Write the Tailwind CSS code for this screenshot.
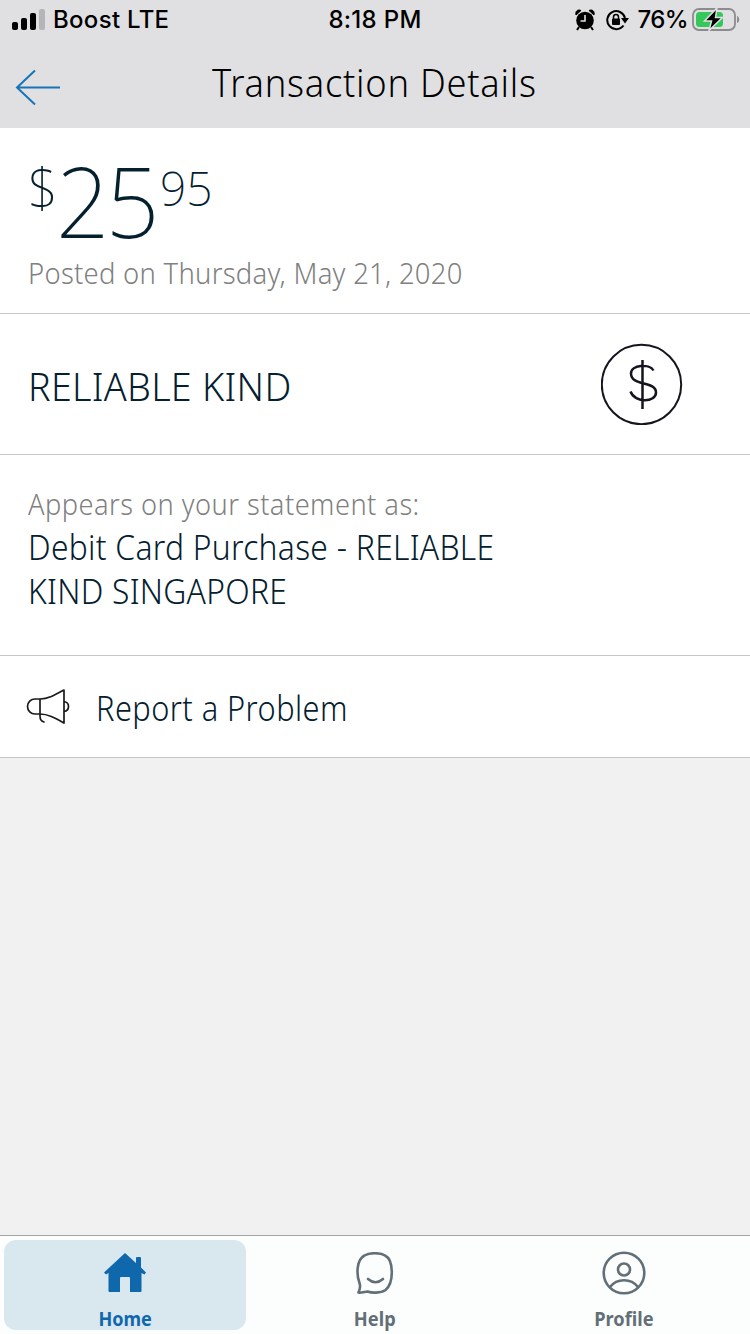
<!DOCTYPE html>
<html lang="en">
<head>
<meta charset="utf-8">
<title>Transaction Details</title>
<script src="https://cdn.jsdelivr.net/npm/@tailwindcss/browser@4"></script>
</head>
<body class="w-[750px] h-[1334px] overflow-hidden flex flex-col bg-[#f1f1f1] font-['Noto_Sans',sans-serif] font-light text-[#04202f] whitespace-nowrap">
<header class="h-32 bg-[#e0e0e2] text-black flex flex-col">
  <div class="h-10 grid grid-cols-3 font-['Inter',sans-serif] font-medium text-[24px] leading-10">
    <div class="flex items-center pl-3">
      <svg class="w-[33px] h-[22px]" viewBox="0 0 33 22"><rect x="0" y="13" width="6" height="8" rx="2"/><rect x="9" y="9" width="6" height="12" rx="2"/><rect x="18" y="4" width="6" height="17" rx="2"/><rect x="27" y="0" width="6" height="21" rx="2" fill="#b5b5b7"/></svg>
      <span class="ml-[8px] tracking-[0.3px]">Boost LTE</span>
    </div>
    <div class="text-center tracking-[0.3px]">8:18 PM</div>
    <div class="flex items-center justify-end pr-[10px]">
      <svg class="w-[20px] h-[22px]" viewBox="0 0 20 22"><circle cx="10" cy="11.500" r="8.800"/><path d="M4 18 2 21M16 18l2 3" stroke="#000" stroke-width="2"/><path d="M1 6C0 2 3 0 6 1.500zM19 6C20 2 17 0 14 1.500z" stroke="#000"/><path d="M10 6v6H5.500" fill="none" stroke="#e0e0e2" stroke-width="1.600"/></svg>
      <svg class="w-[24px] h-[22px] ml-[11px]" viewBox="0 0 24 22"><path d="M17.500 16.500A9 9 0 1 1 19 9" fill="none" stroke="#000" stroke-width="2"/><path d="M15 9h8L19 14.500z"/><rect x="6" y="9.500" width="8" height="6.500" rx="1"/><path d="M7.500 10V8a2.500 2.500 0 0 1 5 0v2" fill="none" stroke="#000" stroke-width="1.500"/></svg>
      <span class="ml-[8px] tracking-[-0.6px]">76%</span>
      <svg class="w-[48px] h-[24px] ml-[4px]" viewBox="0 0 48 24"><rect x="1" y="1" width="42" height="21" rx="6" fill="none" stroke="#8c8c8e" stroke-width="1.800"/><path d="M45 8v7c3-1 3-6 0-7" fill="#8c8c8e"/><rect x="4" y="4" width="27" height="15" rx="3.500" fill="#34c759"/><path d="M25 0 12.500 13h7L17 22.500 30.500 9.500h-7z" stroke="#e0e0e2" stroke-width="1.500"/></svg>
    </div>
  </div>
  <div class="h-[88px] flex">
    <svg class="w-[46px] h-[36px] ml-[15px] mt-[29px]" viewBox="0 0 46 36" fill="none" stroke="#1874b8" stroke-width="2"><path d="M45 18.500H2M20 1.500 2 18.500l18 17"/></svg>
    <h1 class="ml-[151px] mt-[15px] text-[39px] leading-[54px] tracking-[0.8px] origin-left scale-x-[0.93]">Transaction Details</h1>
  </div>
</header>
<main class="bg-white">
  <section class="h-[186px] border-b border-[#c6c6c6] pl-[28px]">
    <div class="flex h-[120px]">
      <span class="w-[28px] text-[55px] leading-[66px] mt-[26px] font-extralight origin-left scale-x-[0.95]">$</span>
      <span class="w-[104px] text-[98px] leading-[90px] mt-[27px] font-extralight tracking-[-4px] origin-left scale-x-[0.96]">25</span>
      <span class="text-[48px] leading-[66px] mt-[27px] font-extralight origin-left scale-x-[0.96]">95</span>
    </div>
    <p class="w-fit text-[30px] leading-[50px] text-[#808080] tracking-[0.3px] origin-left scale-x-[0.914]">Posted on Thursday, May 21, 2020</p>
  </section>
  <section class="h-[141px] border-b border-[#c6c6c6] flex items-center justify-between pl-[28px] pr-[67px]">
    <h2 class="text-[39px] leading-[54px] mt-[4px] tracking-[0.3px] origin-left scale-x-[0.967]">RELIABLE KIND</h2>
    <svg class="w-[82px] h-[82px]" viewBox="0 0 82 82" fill="none" stroke="#15151f" stroke-width="2"><circle cx="40.500" cy="41.500" r="39.700"/><path d="M41.500 17v49M52.500 27.500c-4-7-22.500-6-22.500 3 0 13 25 7 25 19 0 10-21 11-25.500-1" stroke-width="2.500"/></svg>
  </section>
  <section class="h-[201px] border-b border-[#c6c6c6] pl-[28px] pt-[28px]">
    <p class="w-fit text-[29px] leading-[42px] text-[#808080] tracking-[0.5px] origin-left scale-x-[0.938]">Appears on your statement as:</p>
    <p class="w-fit text-[34px] leading-[44px] tracking-[0.3px] origin-left scale-x-[0.935]">Debit Card Purchase - RELIABLE<br>KIND SINGAPORE</p>
  </section>
  <section class="h-[102px] border-b border-[#c6c6c6] flex items-center pl-[26px]">
    <svg class="w-[44px] h-[36px]" viewBox="0 0 44 36" fill="none" stroke="#1a1a1a" stroke-width="1.700" stroke-linejoin="round" stroke-linecap="round"><path d="M38 1C29 6 22 10 14 10H9a7.500 7.500 0 0 0 0 15h5c8 0 15 4 24 9zM14 10v17q0 5 4 6M38 12.500c6 1 6 9 0 10"/></svg>
    <span class="ml-[26px] text-[34px] leading-[48px] mt-[3px] tracking-[0.5px] origin-left scale-x-[0.904]">Report a Problem</span>
  </section>
</main>
<nav class="mt-auto h-[99px] border-t border-[#a3a3a5] bg-[#fcfdfd] grid grid-cols-3 text-[#636f77] font-bold text-[19px] leading-[26px]">
  <a class="ml-1 mt-[4px] h-[90px] w-[242px] rounded-[12px] bg-[#d9e7ef] text-[#1068ac] flex flex-col items-center pt-[13px]">
    <svg class="w-[42px] h-[40px] shrink-0" viewBox="0 0 42 40" fill="currentColor"><path d="M21 0 32 10V5q0-1 1-1h3q1 0 1 1v9.500l5 5-1.500 2-3-1.500V38q0 1-1 1H26V25q0-1-1-1h-8q-1 0-1 1v14H5.500q-1 0-1-1V20L2 21.500 0 19.500z"/></svg>
    <span class="mt-[13px] scale-x-[0.95]">Home</span>
  </a>
  <a class="flex flex-col items-center pt-[16px]">
    <svg class="w-[38px] h-[42px]" viewBox="0 0 38 42" fill="none" stroke="currentColor" stroke-width="2.600" stroke-linejoin="round" stroke-linecap="round"><path d="M3.500 31C.5 23 0 8 8.500 3.500c5-3 16-3 20.500 0C38 8 38 31 29.500 38c-5 3.500-14 3-18 1.500C8 40 4 41 2.500 40.500 4 37 5 35 3.500 31zM12 27q7.500 6.500 15 0"/></svg>
    <span class="mt-[12px] scale-x-[0.96]">Help</span>
  </a>
  <a class="flex flex-col items-center pt-[15px] pr-[2px]">
    <svg class="w-[44px] h-[44px]" viewBox="0 0 44 44" fill="none" stroke="currentColor" stroke-width="2.600"><circle cx="22" cy="22" r="20.300"/><circle cx="22" cy="18.500" r="6"/><path d="M8 36c7-9 21-9 28 0"/></svg>
    <span class="mt-[11px] scale-x-[0.96]">Profile</span>
  </a>
</nav>
</body>
</html>
